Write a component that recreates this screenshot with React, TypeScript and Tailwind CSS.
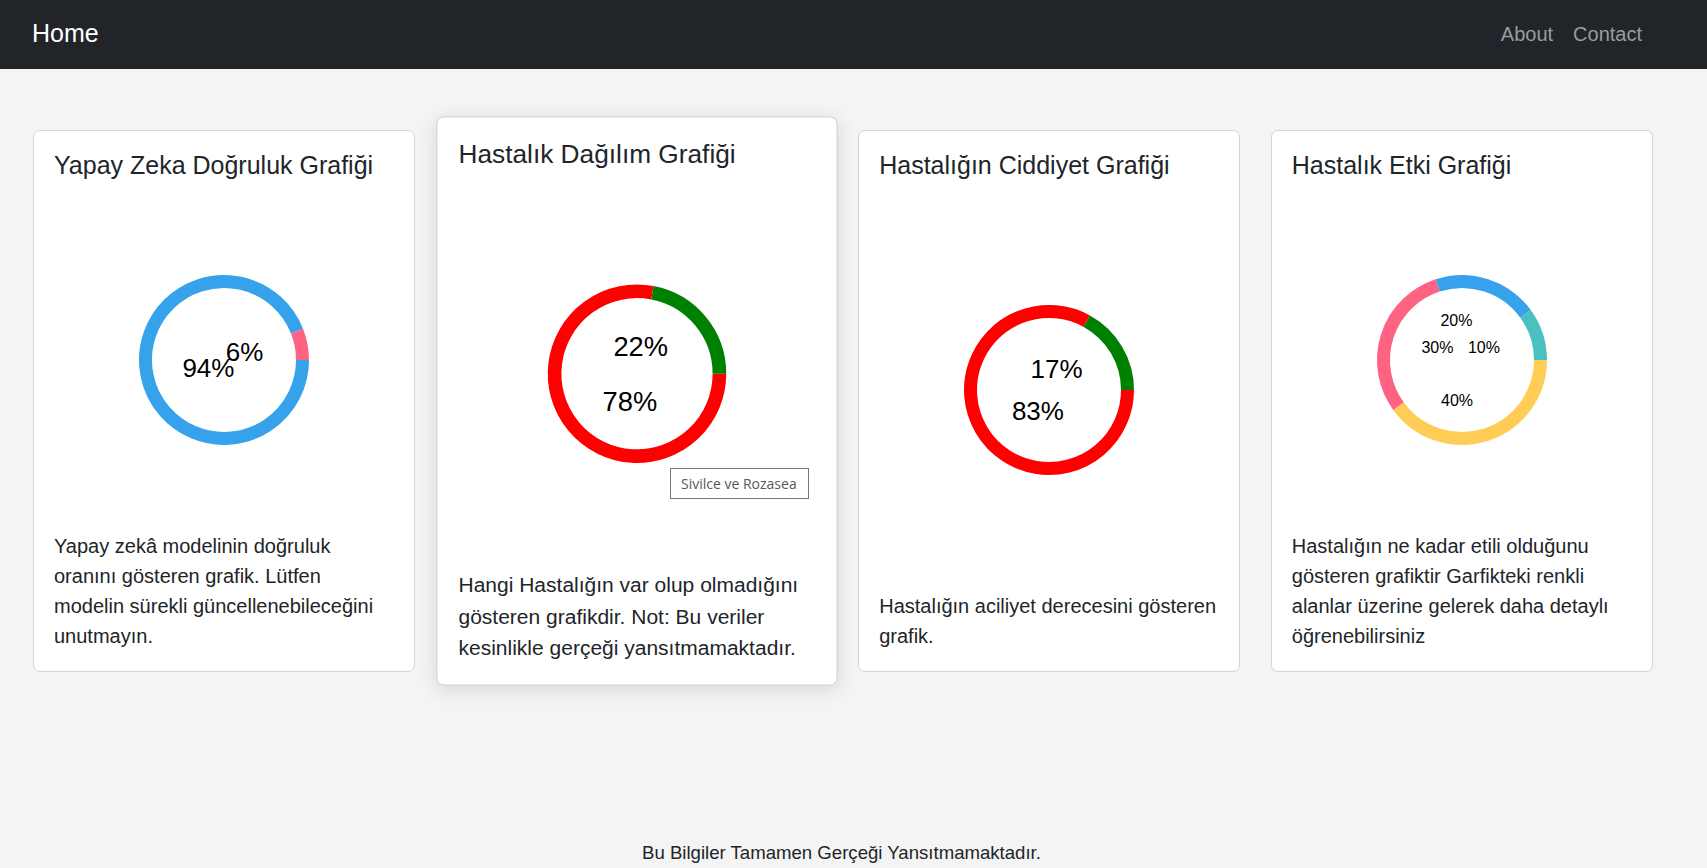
import React from 'react';

type Segment = { value: number; color: string };
type Label = { text: string; x: number; y: number };

type Chart = {
  title: string;
  segments: Segment[];
  labels: Label[];
  labelSize: number;
  text: string;
  active?: boolean;
};

const charts: Chart[] = [
  {
    title: 'Yapay Zeka Doğruluk Grafiği',
    segments: [
      { value: 94, color: '#36A2EB' },
      { value: 6, color: '#FF6384' },
    ],
    labels: [
      { text: '94%', x: -41.6, y: 17 },
      { text: '6%', x: 1.7, y: 0.7 },
    ],
    labelSize: 26,
    text: 'Yapay zekâ modelinin doğruluk oranını gösteren grafik. Lütfen modelin sürekli güncellenebileceğini unutmayın.',
  },
  {
    title: 'Hastalık Dağılım Grafiği',
    segments: [
      { value: 78, color: '#FF0000' },
      { value: 22, color: '#008000' },
    ],
    labels: [
      { text: '22%', x: -22.5, y: -17.1 },
      { text: '78%', x: -32.8, y: 35.9 },
    ],
    labelSize: 26,
    text: 'Hangi Hastalığın var olup olmadığını gösteren grafikdir. Not: Bu veriler kesinlikle gerçeği yansıtmamaktadır.',
    active: true,
  },
  {
    title: 'Hastalığın Ciddiyet Grafiği',
    segments: [
      { value: 83, color: '#FF0000' },
      { value: 17, color: '#008000' },
    ],
    labels: [
      { text: '17%', x: -18.4, y: -11.7 },
      { text: '83%', x: -37.1, y: 30 },
    ],
    labelSize: 26,
    text: 'Hastalığın aciliyet derecesini gösteren grafik.',
  },
  {
    title: 'Hastalık Etki Grafiği',
    segments: [
      { value: 40, color: '#FFCD56' },
      { value: 30, color: '#FF6384' },
      { value: 20, color: '#36A2EB' },
      { value: 10, color: '#4BC0C0' },
    ],
    labels: [
      { text: '20%', x: -21.6, y: -34.3 },
      { text: '30%', x: -40.6, y: -6.7 },
      { text: '10%', x: 5.9, y: -6.7 },
      { text: '40%', x: -21, y: 45.7 },
    ],
    labelSize: 16,
    text: 'Hastalığın ne kadar etili olduğunu gösteren grafiktir Garfikteki renkli alanlar üzerine gelerek daha detaylı öğrenebilirsiniz',
  },
];

function arc(cx: number, cy: number, r: number, a0: number, a1: number) {
  const rad = (d: number) => (d * Math.PI) / 180;
  const x0 = cx + r * Math.cos(rad(a0));
  const y0 = cy + r * Math.sin(rad(a0));
  const x1 = cx + r * Math.cos(rad(a1));
  const y1 = cy + r * Math.sin(rad(a1));
  const large = a1 - a0 > 180 ? 1 : 0;
  return `M ${x0} ${y0} A ${r} ${r} 0 ${large} 1 ${x1} ${y1}`;
}

function Donut({ chart }: { chart: Chart }) {
  let start = 0;
  return (
    <svg width="200" height="200" viewBox="0 0 200 200">
      {chart.segments.map((s, i) => {
        const sweep = (s.value / 100) * 360;
        const d = arc(100, 100, 78.5, start, start + sweep);
        start += sweep;
        return <path key={i} d={d} fill="none" stroke={s.color} strokeWidth={13} />;
      })}
      {chart.labels.map((l) => (
        <text
          key={l.text}
          x={100 + l.x}
          y={100 + l.y}
          fontSize={chart.labelSize}
          fill="#000"
          style={{ fontFamily: '"Liberation Sans", Arial, sans-serif' }}
        >
          {l.text}
        </text>
      ))}
    </svg>
  );
}

function ChartCard({ chart }: { chart: Chart }) {
  return (
    <div
      className={`w-[382px] h-[542px] shrink-0 flex flex-col bg-white border border-[#d4d4d4] rounded-[7px] p-5 ${
        chart.active ? 'scale-105 shadow-[0_4px_18px_rgba(0,0,0,0.12)]' : ''
      }`}
    >
      <h5 className="text-[25px] leading-[28px] text-[#212529] mb-[10px]">{chart.title}</h5>
      <div className="flex-1 flex items-center justify-center">
        <Donut chart={chart} />
      </div>
      <p className="text-[20px] leading-[30px] text-[#212529]">{chart.text}</p>
    </div>
  );
}

export default function App() {
  return (
    <div className="relative min-h-screen bg-[#f4f4f4] font-['Liberation_Sans',Arial,sans-serif]">
      <nav className="h-[69px] bg-[#212529] flex items-center justify-between pl-[32px] pr-[55px] pb-[2px]">
        <a className="text-[25px] leading-[37px] text-white">Home</a>
        <div className="flex items-center">
          <a className="px-[10px] text-[20px] leading-[30px] text-[#9a9c9f]">About</a>
          <a className="px-[10px] text-[20px] leading-[30px] text-[#9a9c9f]">Contact</a>
        </div>
      </nav>

      <div className="flex gap-[30.6px] pl-[33px] mt-[61px]">
        {charts.map((c) => (
          <ChartCard key={c.title} chart={c} />
        ))}
      </div>

      <footer className="mt-[167px] pr-[24px] text-center text-[18.6px] leading-[27px] text-[#212529]">
        Bu Bilgiler Tamamen Gerçeği Yansıtmamaktadır.
      </footer>

      {/* native hover tooltip over the second chart */}
      <div className="absolute left-[670px] top-[468px] w-[139px] h-[31px] flex items-center pl-[10px] bg-white border border-[#767676] text-[14px] text-[#575757] font-['Open_Sans',sans-serif]">
        Sivilce ve Rozasea
      </div>
    </div>
  );
}
